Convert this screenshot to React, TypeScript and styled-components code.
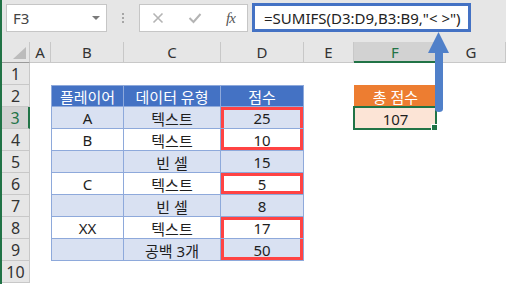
import {Fragment} from "react";
import styled, {createGlobalStyle} from "styled-components";

const GlobalStyle = createGlobalStyle`
  body {
    margin: 0;
    background: #ffffff;
    font-family: "Noto Sans", "Noto Sans CJK KR", sans-serif;
  }
`;

const GREEN = "#217346";
const RED = "#ff4343";

const Frame = styled.div`
  position: relative;
  width: 504px;
  height: 284px;
  border-left: 2px solid ${GREEN};
  overflow: hidden;
  background: #ffffff;
`;

const Toolbar = styled.div`
  display: flex;
  align-items: flex-start;
  height: 42px;
  padding: 4px 0 0 4px;
  box-sizing: border-box;
  background: #e6e6e6;
`;

const NameBox = styled.div`
  display: flex;
  align-items: center;
  justify-content: space-between;
  width: 101px;
  height: 28px;
  box-sizing: border-box;
  padding: 0 6px 0 6px;
  background: #ffffff;
  border: 1px solid #c6c6c6;
  font-size: 15px;
  color: #444;
`;

const DropArrow = styled.span`
  width: 0;
  height: 0;
  border-left: 4px solid transparent;
  border-right: 4px solid transparent;
  border-top: 4px solid #7a7a7a;
`;

const Grip = styled.div`
  display: flex;
  flex-direction: column;
  align-items: center;
  gap: 2px;
  width: 32px;
  padding-top: 9px;

  span {
    width: 2px;
    height: 2px;
    background: #a6a6a6;
  }
`;

const FuncBox = styled.div`
  display: flex;
  align-items: center;
  justify-content: space-around;
  width: 109px;
  height: 28px;
  box-sizing: border-box;
  background: #ffffff;
  border: 1px solid #c6c6c6;
`;

const FxLabel = styled.span`
  font-family: "Liberation Serif", serif;
  font-style: italic;
  font-size: 15px;
  color: #555;
  letter-spacing: -1px;
`;

const FormulaBox = styled.div`
  display: flex;
  align-items: center;
  width: 219px;
  height: 29px;
  margin-left: 4px;
  margin-top: -1px;
  padding-left: 9px;
  box-sizing: border-box;
  background: #ffffff;
  border: 3px solid #4472c4;
  font-size: 15px;
  color: #222;
  white-space: nowrap;
`;

const Sheet = styled.div`
  display: grid;
  grid-template-columns: 28px 21px 73px 97px 83px 50px 83px 1fr;
  grid-template-rows: 21px repeat(10, 22px);
  font-size: 15px;
  color: #1e1e1e;
`;

const Corner = styled.div`
  position: relative;
  background: #e6e6e6;
  border-right: 1px solid #c8c8c8;
  border-bottom: 1px solid #9a9a9a;
  box-sizing: border-box;

  &::after {
    content: "";
    position: absolute;
    right: 3px;
    bottom: 3px;
    width: 0;
    height: 0;
    border-left: 13px solid transparent;
    border-bottom: 12px solid #bcbcbc;
  }
`;

const ColHead = styled.div<{$active?: boolean}>`
  display: flex;
  align-items: center;
  justify-content: center;
  box-sizing: border-box;
  background: ${p => p.$active ? "#d2d2d2" : "#e6e6e6"};
  border-right: 1px solid #c8c8c8;
  border-bottom: ${p => p.$active ? `2px solid ${GREEN}` : "1px solid #c8c8c8"};
  color: ${p => p.$active ? GREEN : "#333"};
  padding-top: ${p => p.$active ? "1px" : "0"};
`;

const RowHead = styled.div<{$active?: boolean}>`
  display: flex;
  align-items: center;
  justify-content: center;
  box-sizing: border-box;
  background: ${p => p.$active ? "#d2d2d2" : "#e6e6e6"};
  border-right: ${p => p.$active ? `2px solid ${GREEN}` : "1px solid #c8c8c8"};
  border-bottom: 1px solid #c8c8c8;
  color: ${p => p.$active ? GREEN : "#333"};
  font-size: 16px;
`;

type Red = "top" | "bottom" | "both";

interface CellProps {
  $fill?: string;
  $color?: string;
  $grid?: boolean;
  $left?: boolean;
  $top?: boolean;
  $red?: Red;
}

const redShadow = (red?: Red) => {
  if (!red) return "none";
  const sides = [`inset 3px 0 0 ${RED}`, `inset -3px 0 0 ${RED}`];
  if (red !== "bottom") sides.push(`inset 0 3px 0 ${RED}`);
  if (red !== "top") sides.push(`inset 0 -3px 0 ${RED}`);
  return sides.join(", ");
};

const Cell = styled.div<CellProps>`
  position: relative;
  display: flex;
  align-items: center;
  justify-content: center;
  box-sizing: border-box;
  white-space: nowrap;
  background: ${p => p.$fill ?? "transparent"};
  color: ${p => p.$color ?? "#1e1e1e"};
  border-right: ${p => p.$grid ? "1px solid #8ea9db" : "none"};
  border-bottom: ${p => p.$grid ? "1px solid #8ea9db" : "none"};
  border-left: ${p => p.$left ? "1px solid #8ea9db" : "none"};
  border-top: ${p => p.$top ? "1px solid #8ea9db" : "none"};
  box-shadow: ${p => redShadow(p.$red)};
  padding-top: 1px;
`;

const Selection = styled.div`
  position: absolute;
  left: -1px;
  top: -1px;
  right: 0;
  bottom: -1px;
  border: 2px solid ${GREEN};
  pointer-events: none;
`;

const FillHandle = styled.div`
  position: absolute;
  right: -3px;
  bottom: -3px;
  width: 5px;
  height: 5px;
  background: ${GREEN};
  border: 1px solid #ffffff;
`;

const Arrow = styled.svg`
  position: absolute;
  left: 424px;
  top: 31px;
`;

interface TableRow {
  player: string;
  kind: string;
  score: string;
  red?: Red;
}

const tableRows: TableRow[] = [
  {player: "A", kind: "텍스트", score: "25", red: "top"},
  {player: "B", kind: "텍스트", score: "10", red: "bottom"},
  {player: "", kind: "빈 셀", score: "15"},
  {player: "C", kind: "텍스트", score: "5", red: "both"},
  {player: "", kind: "빈 셀", score: "8"},
  {player: "XX", kind: "텍스트", score: "17", red: "top"},
  {player: "", kind: "공백 3개", score: "50", red: "bottom"},
];

const COLS = ["A", "B", "C", "D", "E", "F", "G"];

function renderRow(r: number) {
  const cells = [<Cell key="a"/>];

  if (r === 2) {
    const head = ["플레이어", "데이터 유형", "점수"];
    head.forEach((text, i) => cells.push(
      <Cell key={"h" + i} $fill="#4472c4" $color="#ffffff" $grid $left={i === 0} $top>{text}</Cell>
    ));
  } else if (r >= 3 && r <= 9) {
    const row = tableRows[r - 3];
    const fill = r % 2 === 1 ? "#d9e1f2" : "#ffffff";
    cells.push(<Cell key="b" $fill={fill} $grid $left>{row.player}</Cell>);
    cells.push(<Cell key="c" $fill={fill} $grid>{row.kind}</Cell>);
    cells.push(<Cell key="d" $fill={fill} $grid $red={row.red}>{row.score}</Cell>);
  } else {
    cells.push(<Cell key="b"/>, <Cell key="c"/>, <Cell key="d"/>);
  }

  cells.push(<Cell key="e"/>);

  if (r === 2) {
    cells.push(<Cell key="f" $fill="#ed7d31" $color="#ffffff">총 점수</Cell>);
  } else if (r === 3) {
    cells.push(
      <Cell key="f" $fill="#fce4d6">
        107
        <Selection><FillHandle/></Selection>
      </Cell>
    );
  } else {
    cells.push(<Cell key="f"/>);
  }

  cells.push(<Cell key="g"/>);
  return cells;
}

export default function App() {
  const rows = Array.from({length: 10}, (_, i) => i + 1);

  return (
    <Frame>
      <GlobalStyle/>
      <Toolbar>
        <NameBox>
          <span>F3</span>
          <DropArrow/>
        </NameBox>
        <Grip><span/><span/><span/></Grip>
        <FuncBox>
          <svg width="12" height="12" viewBox="0 0 12 12">
            <path d="M1.5 1.5 L10.5 10.5 M10.5 1.5 L1.5 10.5" stroke="#b4b4b4" strokeWidth="1.6" fill="none"/>
          </svg>
          <svg width="14" height="12" viewBox="0 0 14 12">
            <path d="M1.5 6 L5.5 10 L12.5 2" stroke="#b4b4b4" strokeWidth="2" fill="none"/>
          </svg>
          <FxLabel>fx</FxLabel>
        </FuncBox>
        <FormulaBox>=SUMIFS(D3:D9,B3:B9,"&lt; &gt;")</FormulaBox>
      </Toolbar>

      <Sheet>
        <Corner/>
        {COLS.map(c => <ColHead key={c} $active={c === "F"}>{c}</ColHead>)}
        {rows.map(r => (
          <Fragment key={r}>
            <RowHead $active={r === 3}>{r}</RowHead>
            {renderRow(r)}
          </Fragment>
        ))}
      </Sheet>

      <Arrow width="24" height="84" viewBox="0 0 24 84">
        <path d="M12.5 1 L23 22 L17 22 L17 78 Q17 81 13 81 Q9 81 9 78 L9 22 L2 22 Z" fill="#5080c9"/>
      </Arrow>
    </Frame>
  );
}
